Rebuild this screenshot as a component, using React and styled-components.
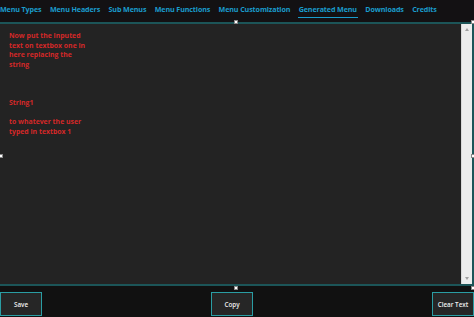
import React from "react";
import styled, { createGlobalStyle } from "styled-components";

const Global = createGlobalStyle`
  html, body { margin: 0; padding: 0; background: #121212; }
  body { width: 474px; height: 317px; overflow: hidden; font-family: "Open Sans", "Noto Sans", sans-serif; }
  #root { width: 474px; height: 317px; }
`;

const Page = styled.div`
  position: relative;
  width: 474px;
  height: 317px;
  display: flex;
  flex-direction: column;
  background: #121212;
  overflow: hidden;
`;

const Tabs = styled.div`
  height: 22px;
  display: flex;
  align-items: flex-start;
  gap: 8.4px;
  background: #131113;
`;

const Tab = styled.div`
  position: relative;
  height: 18px;
  line-height: 18px;
  font-size: 7.15px;
  font-weight: 700;
  color: #1a9ccc;
  white-space: nowrap;
  letter-spacing: -0.12px;
  &::after {
    content: "";
    display: ${(p) => (p.$active ? "block" : "none")};
    position: absolute;
    left: -1px;
    right: -1px;
    bottom: 0;
    height: 1.5px;
    background: #1a9ccc;
  }
`;

const Editor = styled.div`
  flex: 1;
  display: flex;
  border-top: 2px solid #1c5558;
  border-bottom: 2px solid #1c5558;
  border-right: 2px solid #1c5558;
  background: #232323;
`;

const TextArea = styled.div`
  flex: 1;
  padding: 7px 9px;
  color: #d42828;
  font-size: 6.9px;
  font-weight: 700;
  line-height: 9.6px;
  white-space: pre;
`;

const Scrollbar = styled.div`
  width: 10px;
  display: flex;
  flex-direction: column;
  justify-content: space-between;
  align-items: center;
  background: #ececec;
  border-left: 1px solid #d8d8d8;
`;

const Arrow = styled.div`
  width: 0;
  height: 0;
  margin: 4px 0;
  border-left: 2.5px solid transparent;
  border-right: 2.5px solid transparent;
  ${(p) => (p.$up ? "border-bottom: 3px solid #a0a0a0;" : "border-top: 3px solid #a0a0a0;")}
`;

const Footer = styled.div`
  height: 30px;
  display: flex;
  align-items: flex-end;
  padding-bottom: 1px;
  background: #111111;
`;

const Spacer = styled.div`
  flex: ${(p) => p.$grow};
`;

const Button = styled.button`
  width: 42px;
  height: 24px;
  padding: 0;
  background: #262626;
  border: 1.5px solid #2a9da3;
  color: #f0f0f0;
  font-family: "Open Sans", "Noto Sans", sans-serif;
  font-size: 6.3px;
  font-weight: 600;
  cursor: pointer;
`;

const Handle = styled.div`
  position: absolute;
  width: 4px;
  height: 4px;
  background: #ffffff;
  border: 0.5px solid #888;
  box-sizing: border-box;
  left: ${(p) => p.$x}px;
  top: ${(p) => p.$y}px;
`;

const tabs = [
  "Menu Types",
  "Menu Headers",
  "Sub Menus",
  "Menu Functions",
  "Menu Customization",
  "Generated Menu",
  "Downloads",
  "Credits",
];

const text = `Now put the inputed
text on textbox one in
here replacing the
string



String1

to whatever the user
typed in textbox 1`;

export default function App() {
  return (
    <>
      <Global />
      <Page>
        <Tabs>
          {tabs.map((t) => (
            <Tab key={t} $active={t === "Generated Menu"}>
              {t}
            </Tab>
          ))}
        </Tabs>
        <Editor>
          <TextArea>{text}</TextArea>
          <Scrollbar>
            <Arrow $up />
            <Arrow />
          </Scrollbar>
        </Editor>
        <Footer>
          <Button>Save</Button>
          <Spacer $grow={169} />
          <Button>Copy</Button>
          <Spacer $grow={179} />
          <Button>Clear Text</Button>
        </Footer>
        <Handle $x={234} $y={20} />
        <Handle $x={471} $y={20} />
        <Handle $x={471} $y={154} />
        <Handle $x={234} $y={286} />
        <Handle $x={471} $y={286} />
        <Handle $x={-1} $y={154} />
      </Page>
    </>
  );
}
